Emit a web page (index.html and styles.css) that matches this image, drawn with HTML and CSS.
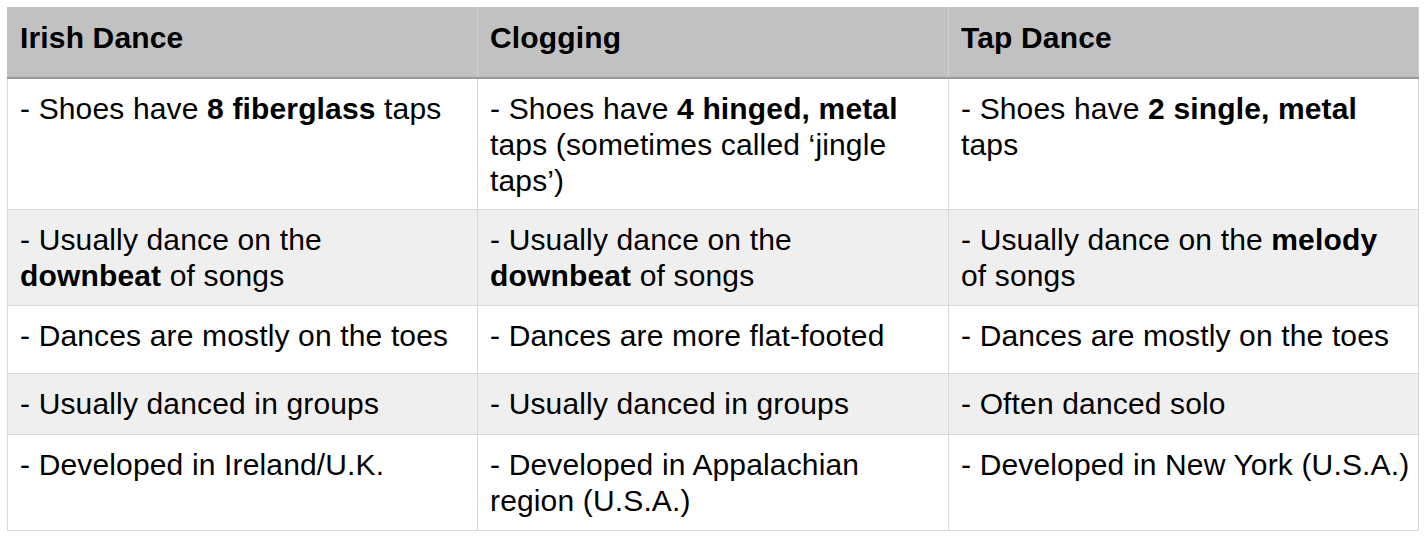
FILE: index.html
```html
<!DOCTYPE html>
<html>
<head>
<meta charset="utf-8">
<link rel="stylesheet" href="styles.css">
</head>
<body>
<table class="grid">
  <colgroup><col class="c1"><col class="c2"><col class="c3"></colgroup>
  <thead>
    <tr class="head">
      <th>Irish Dance</th><th>Clogging</th><th>Tap Dance</th>
    </tr>
  </thead>
  <tbody>
    <tr class="r1">
      <td>- Shoes have <b>8 fiberglass</b> taps</td>
      <td>- Shoes have <b>4 hinged, metal</b><br>taps (sometimes called ‘jingle<br>taps’)</td>
      <td>- Shoes have <b>2 single, metal</b><br>taps</td>
    </tr>
    <tr class="r2 alt">
      <td>- Usually dance on the<br><b>downbeat</b> of songs</td>
      <td>- Usually dance on the<br><b>downbeat</b> of songs</td>
      <td>- Usually dance on the <b>melody</b><br>of songs</td>
    </tr>
    <tr class="r3">
      <td>- Dances are mostly on the toes</td>
      <td>- Dances are more flat-footed</td>
      <td>- Dances are mostly on the toes</td>
    </tr>
    <tr class="r4 alt">
      <td>- Usually danced in groups</td>
      <td>- Usually danced in groups</td>
      <td>- Often danced solo</td>
    </tr>
    <tr class="r5">
      <td>- Developed in Ireland/U.K.</td>
      <td>- Developed in Appalachian<br>region (U.S.A.)</td>
      <td>- Developed in New York (U.S.A.)</td>
    </tr>
  </tbody>
</table>
</body>
</html>
```
FILE: styles.css
```css
html, body {
  margin: 0;
  padding: 0;
  background: #ffffff;
}
body {
  padding: 7px 0 0 7px;
  font-family: "Liberation Sans", Arial, sans-serif;
  color: #000;
}
.grid {
  border-collapse: collapse;
  table-layout: fixed;
  width: 1411px;
  font-size: 30px;
  line-height: 36px;
  letter-spacing: 0.15px;
}
.c1 { width: 470px; }
.c2 { width: 471px; }
.c3 { width: 470px; }
.grid th, .grid td {
  text-align: left;
  vertical-align: top;
  padding: 12px 0 0 12px;
  border: 1px solid #d8d8d8;
  box-sizing: border-box;
  white-space: nowrap;
  overflow: hidden;
}
.grid th {
  background: #c0c1c0;
  font-weight: bold;
  padding-top: 12px;
  border-color: #c0c1c0 #d0d0d0 #999999 #c0c1c0;
  border-bottom-width: 2px;
}
.grid b { font-weight: bold; }
.head { height: 70px; }
.r1 { height: 132px; }
.r2 { height: 96px; }
.r3 { height: 68px; }
.r4 { height: 61px; }
.r5 { height: 96px; }
.alt td { background: #efefef; }
```
